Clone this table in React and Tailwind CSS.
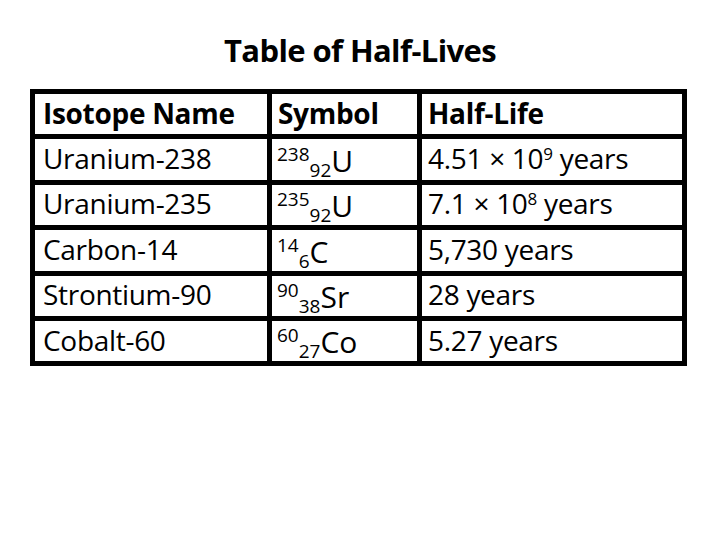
function Sym({ a, z, el }) {
  return (
    <span className="flex items-baseline leading-none pb-[4px] tracking-normal">
      <span className="text-[19px] relative -top-[11px]">{a}</span>
      <span className="text-[19px] relative top-[5px]">{z}</span>
      <span className="text-[30px]">{el}</span>
    </span>
  );
}

function Pow({ base, exp, rest }) {
  return (
    <>
      {base}
      <sup className="text-[17px] -top-[9px]">{exp}</sup>
      {rest}
    </>
  );
}

export default function App() {
  const rows = [
    ["Uranium-238", ["238", "92", "U"], <Pow base="4.51 × 10" exp="9" rest=" years" />],
    ["Uranium-235", ["235", "92", "U"], <Pow base="7.1 × 10" exp="8" rest=" years" />],
    ["Carbon-14", ["14", "6", "C"], "5,730 years"],
    ["Strontium-90", ["90", "38", "Sr"], "28 years"],
    ["Cobalt-60", ["60", "27", "Co"], "5.27 years"],
  ];
  const cell = "bg-white flex h-[40.4px] whitespace-nowrap";
  const txt = cell + " items-center leading-none pb-[3px]";
  return (
    <div className="w-[720px] h-[540px] bg-white text-black" style={{ fontFamily: '"Open Sans", "Noto Sans", sans-serif' }}>
      <div className="pt-[30px] h-[89px] text-center font-bold text-[31px] leading-[40px] tracking-[-0.6px]">Table of Half-Lives</div>
      <div className="ml-[30px] w-[657px] grid grid-cols-[232px_145px_260px] gap-[5px] p-[5px] bg-black text-[28px] tracking-[-0.3px]">
        <div className={txt + " font-bold pl-[8px]"}>Isotope Name</div>
        <div className={txt + " font-bold pl-[6px]"}>Symbol</div>
        <div className={txt + " font-bold pl-[6px]"}>Half-Life</div>
        {rows.map((r, i) => [
          <div key={i + "a"} className={txt + " pl-[8px]"}>{r[0]}</div>,
          <div key={i + "b"} className={cell + " items-end pl-[5px]"}>
            <Sym a={r[1][0]} z={r[1][1]} el={r[1][2]} />
          </div>,
          <div key={i + "c"} className={txt + " pl-[6px]"}><span>{r[2]}</span></div>,
        ])}
      </div>
    </div>
  );
}
